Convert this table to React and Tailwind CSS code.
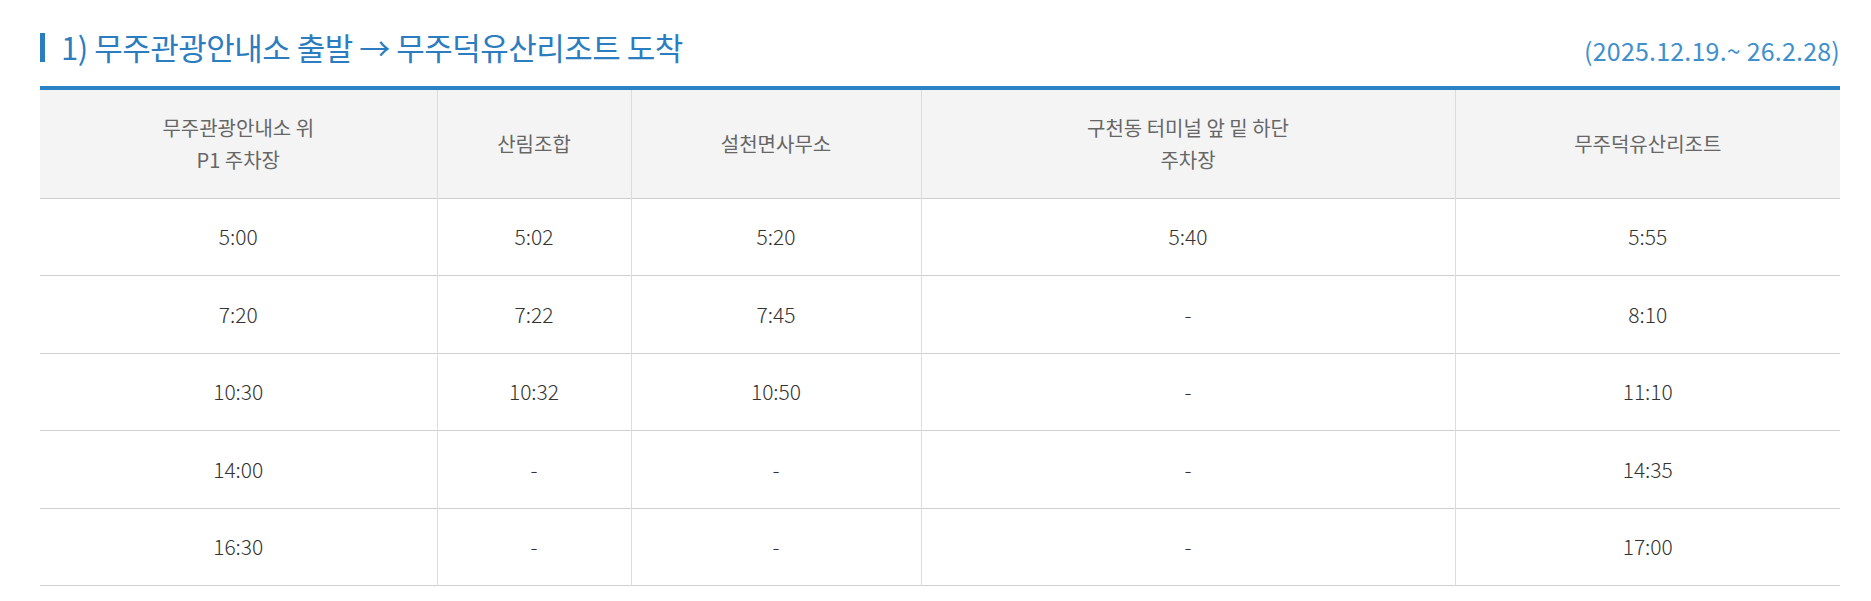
import React from "react";

const headers = [
  ["무주관광안내소 위", "P1 주차장"],
  ["산림조합"],
  ["설천면사무소"],
  ["구천동 터미널 앞 밑 하단", "주차장"],
  ["무주덕유산리조트"],
];

const rows = [
  ["5:00", "5:02", "5:20", "5:40", "5:55"],
  ["7:20", "7:22", "7:45", "-", "8:10"],
  ["10:30", "10:32", "10:50", "-", "11:10"],
  ["14:00", "-", "-", "-", "14:35"],
  ["16:30", "-", "-", "-", "17:00"],
];

const widths = ["w-[397px]", "w-[194px]", "w-[290px]", "w-[534px]", "w-[385px]"];

export default function App() {
  return (
    <div
      className="w-[1871px] h-[601px] bg-white pl-[40px]"
      style={{ fontFamily: '"Noto Sans CJK KR", "Noto Sans", sans-serif' }}
    >
      <div className="w-[1800px]">
        <div className="flex items-center justify-between pt-[28px] h-[86px] pb-[20px]">
          <h1 className="flex items-center text-[31px] leading-[38px] font-normal text-[#2b7dc0] tracking-[-0.5px]">
            <span className="inline-block w-[5px] h-[29px] bg-[#2b7dc0] mr-[16px]" />
            1) 무주관광안내소 출발 → 무주덕유산리조트 도착
          </h1>
          <span className="text-[25px] leading-[38px] font-normal text-[#4090cc] mt-[5px] tracking-[0.2px]">
            (2025.12.19.~ 26.2.28)
          </span>
        </div>
        <table className="w-[1800px] table-fixed border-collapse border-t-4 border-[#2a82c4]">
          <colgroup>
            {widths.map((w, i) => (
              <col key={i} className={w} />
            ))}
          </colgroup>
          <thead>
            <tr className="h-[110px] bg-[#f4f4f4] border-b border-[#cfcfcf]">
              {headers.map((h, i) => (
                <th
                  key={i}
                  className={
                    "text-center align-middle font-normal text-[20px] leading-[32px] text-[#666] " +
                    (i > 0 ? "border-l border-[#dcdcdc]" : "")
                  }
                >
                  {h.map((line, j) => (
                    <div key={j}>{line}</div>
                  ))}
                </th>
              ))}
            </tr>
          </thead>
          <tbody>
            {rows.map((r, ri) => (
              <tr key={ri} className="h-[77.5px] border-b border-[#cfcfcf]">
                {r.map((c, ci) => (
                  <td
                    key={ci}
                    className={
                      "text-center align-middle text-[21px] font-light text-[#333] " +
                      (ci > 0 ? "border-l border-[#dcdcdc]" : "")
                    }
                  >
                    {c}
                  </td>
                ))}
              </tr>
            ))}
          </tbody>
        </table>
      </div>
    </div>
  );
}
